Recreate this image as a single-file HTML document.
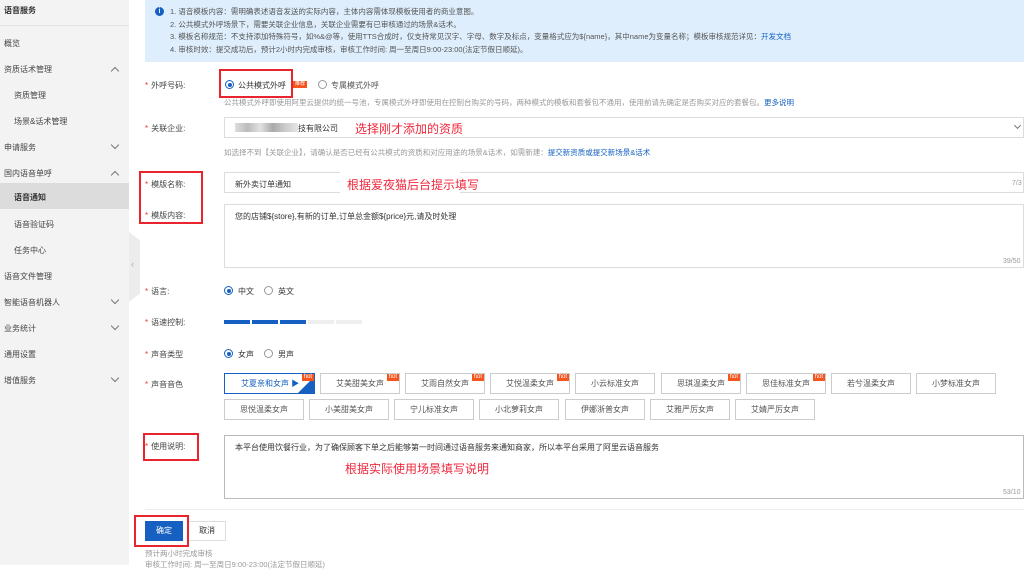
<!DOCTYPE html>
<html><head><meta charset="utf-8"><style>
*{margin:0;padding:0;box-sizing:border-box}
body{width:1024px;height:565px;overflow:hidden;background:#fff;position:relative;font-family:"Liberation Sans","Noto Sans CJK SC",sans-serif;font-size:8px;color:#333}
.a{position:absolute;white-space:nowrap}
.side{position:absolute;left:0;top:0;width:129px;height:565px;background:#f3f3f3}
.si{position:absolute;left:4px;font-size:8px;color:#444}
.sub{left:14px}
.chev{position:absolute;left:112px;width:6px;height:6px;border-left:1px solid #777;border-top:1px solid #777}
.up{transform:rotate(45deg)}.dn{transform:rotate(225deg)}
.lbl{position:absolute;left:145px;font-size:8px;color:#444}
.lbl b{color:#e33;font-weight:normal;margin-right:3px}
.radio{position:absolute;width:9px;height:9px;border-radius:50%;border:1px solid #999;background:#fff}
.radio.on{border-color:#1560c0}
.radio.on:after{content:"";position:absolute;left:1.5px;top:1.5px;width:4px;height:4px;border-radius:50%;background:#1560c0}
.box{position:absolute;border:1px solid #dcdcdc;background:#fff}
.red{position:absolute;border:2px solid #e8252c}
.ann{position:absolute;color:#f0283c;font-size:12px;white-space:nowrap}
.vb{position:absolute;height:21px;width:80px;border:1px solid #ccc;text-align:center;line-height:19px;font-size:8px;color:#555;background:#fff}
.hot{position:absolute;right:0;top:0;background:#f5541e;color:#fff;font-size:6px;line-height:7px;padding:0 2px}
.hint{color:#999;font-size:7.5px}
.blue{color:#1560c0}
</style></head><body>
<div class="side">
<div class="si" style="top:5px;font-weight:bold;color:#333">语音服务</div>
<div style="position:absolute;left:0;top:25px;width:129px;height:1px;background:#e4e4e4"></div>
<div class="si" style="top:38px">概览</div>
<div class="si" style="top:64px">资质话术管理</div><div class="chev up" style="top:68px"></div>
<div class="si sub" style="top:90px">资质管理</div>
<div class="si sub" style="top:116px">场景&amp;话术管理</div>
<div class="si" style="top:142px">申请服务</div><div class="chev dn" style="top:142px"></div>
<div class="si" style="top:168px">国内语音单呼</div><div class="chev up" style="top:172px"></div>
<div style="position:absolute;left:0;top:183px;width:129px;height:26px;background:#dcdcdc"></div>
<div class="si sub" style="top:192px;font-weight:bold;color:#333">语音通知</div>
<div class="si sub" style="top:219px">语音验证码</div>
<div class="si sub" style="top:245px">任务中心</div>
<div class="si" style="top:271px">语音文件管理</div>
<div class="si" style="top:297px">智能语音机器人</div><div class="chev dn" style="top:297px"></div>
<div class="si" style="top:323px">业务统计</div><div class="chev dn" style="top:323px"></div>
<div class="si" style="top:349px">通用设置</div>
<div class="si" style="top:375px">增值服务</div><div class="chev dn" style="top:375px"></div>
</div>
<div style="position:absolute;left:129px;top:232px;width:11px;height:70px;background:#ececec;clip-path:polygon(0 0,100% 12%,100% 88%,0 100%)"></div>
<div class="a" style="left:131px;top:259px;color:#aaa;font-size:9px">‹</div>

<div style="position:absolute;left:145px;top:0;width:879px;height:62px;background:#deeefd"></div>
<div style="position:absolute;left:155px;top:7px;width:9px;height:9px;border-radius:50%;background:#1560c0;color:#fff;font-size:7px;text-align:center;line-height:9px;font-weight:bold">i</div>
<div class="a" style="left:170px;top:6px;font-size:7.5px;color:#555;line-height:12.5px">1. 语音模板内容：需明确表述语音发送的实际内容，主体内容需体现模板使用者的商业意图。<br>2. 公共模式外呼场景下，需要关联企业信息，关联企业需要有已审核通过的场景&amp;话术。<br>3. 模板名称规范：不支持添加特殊符号，如%&amp;@等，使用TTS合成时，仅支持常见汉字、字母、数字及标点，变量格式应为${name}，其中name为变量名称；模板审核规范详见：<span class="blue">开发文档</span><br>4. 审核时效：提交成功后，预计2小时内完成审核，审核工作时间: 周一至周日9:00-23:00(法定节假日顺延)。</div>

<div class="lbl" style="top:80px"><b>*</b>外呼号码:</div>
<div class="radio on" style="left:225px;top:80px"></div>
<div class="a" style="left:238px;top:80px;color:#333">公共模式外呼</div>
<div class="a" style="left:293px;top:81px;background:#f5541e;color:#fff;font-size:5px;padding:0 2px;line-height:7px">推荐</div>
<div class="radio" style="left:318px;top:80px"></div>
<div class="a" style="left:331px;top:80px;color:#555">专属模式外呼</div>
<div class="red" style="left:219px;top:69px;width:74px;height:29px"></div>
<div class="a hint" style="left:224px;top:97px">公共模式外呼即使用阿里云提供的统一号池，专属模式外呼即使用在控制台购买的号码，两种模式的模板和套餐包不通用，使用前请先确定是否购买对应的套餐包。<span class="blue">更多说明</span></div>

<div class="lbl" style="top:123px"><b>*</b>关联企业:</div>
<div class="box" style="left:224px;top:117px;width:800px;height:21px"></div>
<div style="position:absolute;left:235px;top:123px;width:63px;height:9px;background:linear-gradient(90deg,#ddd,#bbb,#e2e2e2,#aaa,#ccc,#e5e5e5)"></div>
<div class="a" style="left:298px;top:123px;color:#333">技有限公司</div>
<div class="ann" style="left:355px;top:120px">选择刚才添加的资质</div>
<div style="position:absolute;left:1015px;top:123px;width:5px;height:5px;border-right:1px solid #777;border-bottom:1px solid #777;transform:rotate(45deg)"></div>
<div class="a hint" style="left:224px;top:147px">如选择不到【关联企业】，请确认是否已经有公共模式的资质和对应用途的场景&amp;话术，如需新建：<span class="blue">提交新资质或提交新场景&amp;话术</span></div>

<div class="lbl" style="top:179px"><b>*</b>模版名称:</div>
<div class="box" style="left:224px;top:172px;width:800px;height:21px"></div>
<div class="a" style="left:235px;top:179px;color:#333">新外卖订单通知</div>
<div style="position:absolute;left:340px;top:172px;width:120px;height:21px;background:#fff"></div>
<div class="ann" style="left:347px;top:176px">根据爱夜猫后台提示填写</div>
<div class="a" style="left:1012px;top:180px;color:#999;font-size:7px">7/3</div>
<div class="lbl" style="top:210px"><b>*</b>模版内容:</div>
<div class="box" style="left:224px;top:204px;width:800px;height:64px"></div>
<div class="a" style="left:235px;top:211px;color:#333">您的店铺${store},有新的订单,订单总金额${price}元,请及时处理</div>
<div class="a" style="left:1003px;top:258px;color:#999;font-size:7px">39/50</div>
<div class="red" style="left:139px;top:171px;width:64px;height:53px"></div>

<div class="lbl" style="top:286px"><b>*</b>语言:</div>
<div class="radio on" style="left:224px;top:286px"></div><div class="a" style="left:238px;top:286px">中文</div>
<div class="radio" style="left:264px;top:286px"></div><div class="a" style="left:278px;top:286px">英文</div>

<div class="lbl" style="top:317px"><b>*</b>语速控制:</div>
<div style="position:absolute;left:224px;top:320px;width:26px;height:4px;background:#1560c0"></div>
<div style="position:absolute;left:252px;top:320px;width:26px;height:4px;background:#1560c0"></div>
<div style="position:absolute;left:280px;top:320px;width:26px;height:4px;background:#1560c0"></div>
<div style="position:absolute;left:308px;top:320px;width:26px;height:4px;background:#eee"></div>
<div style="position:absolute;left:336px;top:320px;width:26px;height:4px;background:#eee"></div>

<div class="lbl" style="top:349px"><b>*</b>声音类型</div>
<div class="radio on" style="left:224px;top:349px"></div><div class="a" style="left:238px;top:349px">女声</div>
<div class="radio" style="left:264px;top:349px"></div><div class="a" style="left:278px;top:349px">男声</div>

<div class="lbl" style="top:379px"><b>*</b>声音音色</div>
<div class="vb" style="left:224px;top:373px;width:91px;border-color:#1560c0;color:#1560c0;text-align:left;padding-left:16px">艾夏亲和女声 ▶<div style="position:absolute;right:0;bottom:0;width:0;height:0;border-left:16px solid transparent;border-bottom:16px solid #1560c0"></div><div class="hot">hot</div></div>
<div class="vb" style="left:320px;top:373px">艾美甜美女声<div class="hot">hot</div></div>
<div class="vb" style="left:405px;top:373px">艾雨自然女声<div class="hot">hot</div></div>
<div class="vb" style="left:490px;top:373px">艾悦温柔女声<div class="hot">hot</div></div>
<div class="vb" style="left:575px;top:373px">小云标准女声</div>
<div class="vb" style="left:661px;top:373px">思琪温柔女声<div class="hot">hot</div></div>
<div class="vb" style="left:746px;top:373px">思佳标准女声<div class="hot">hot</div></div>
<div class="vb" style="left:831px;top:373px">若兮温柔女声</div>
<div class="vb" style="left:916px;top:373px">小梦标准女声</div>
<div class="vb" style="left:224px;top:399px">思悦温柔女声</div>
<div class="vb" style="left:309px;top:399px">小美甜美女声</div>
<div class="vb" style="left:394px;top:399px">宁儿标准女声</div>
<div class="vb" style="left:479px;top:399px">小北萝莉女声</div>
<div class="vb" style="left:565px;top:399px">伊娜浙普女声</div>
<div class="vb" style="left:650px;top:399px">艾雅严厉女声</div>
<div class="vb" style="left:735px;top:399px">艾婧严厉女声</div>

<div class="lbl" style="top:441px"><b>*</b>使用说明:</div>
<div class="red" style="left:143px;top:433px;width:56px;height:28px"></div>
<div class="box" style="left:224px;top:435px;width:800px;height:64px;border-color:#bbb"></div>
<div class="a" style="left:235px;top:442px;color:#333">本平台使用饮餐行业，为了确保顾客下单之后能够第一时间通过语音服务来通知商家，所以本平台采用了阿里云语音服务</div>
<div class="ann" style="left:345px;top:460px">根据实际使用场景填写说明</div>
<div class="a" style="left:1003px;top:489px;color:#999;font-size:7px">53/10</div>

<div style="position:absolute;left:145px;top:509px;width:879px;height:1px;background:#eee"></div>
<div style="position:absolute;left:145px;top:521px;width:38px;height:20px;background:#1560c0;color:#fff;text-align:center;line-height:20px;font-size:8px">确定</div>
<div style="position:absolute;left:188px;top:521px;width:38px;height:20px;border:1px solid #ddd;text-align:center;line-height:18px;font-size:8px;color:#333">取消</div>
<div class="red" style="left:134px;top:515px;width:55px;height:32px"></div>
<div class="a hint" style="left:145px;top:548px">预计两小时完成审核</div>
<div class="a hint" style="left:145px;top:559px">审核工作时间: 周一至周日9:00-23:00(法定节假日顺延)</div>
</body></html>
